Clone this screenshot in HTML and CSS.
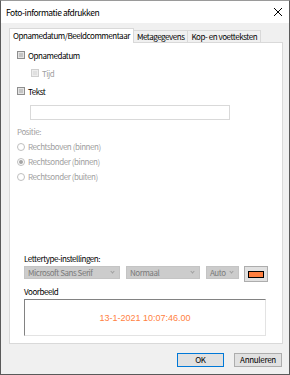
FILE: index.html
```html
<!DOCTYPE html>
<html lang="nl">
<head>
    <meta charset="UTF-8">
    <title>Foto-informatie afdrukken</title>
    <link rel="stylesheet" href="styles.css">
</head>
<body>
    <div class="window">
        <div class="titlebar">
            <span class="title">Foto-informatie afdrukken</span>
            <span class="close">
                <svg width="10" height="10" viewBox="0 0 10 10"><path d="M1 1L9 9M9 1L1 9" stroke="#000" stroke-width="1"/></svg>
            </span>
        </div>

        <div class="content">
            <div class="tabs">
                <div class="tab active">Opnamedatum/Beeldcommentaar</div>
                <div class="tab">Metagegevens</div>
                <div class="tab">Kop- en voetteksten</div>
            </div>

            <div class="panel">
                <div class="row">
                    <span class="check"></span><span>Opnamedatum</span>
                </div>
                <div class="row indent">
                    <span class="check disabled"></span><span class="muted">Tijd</span>
                </div>
                <div class="row">
                    <span class="check"></span><span>Tekst</span>
                </div>
                <div class="textbox"></div>

                <div class="label muted">Positie:</div>
                <div class="radio-row"><span class="radio"></span><span class="muted">Rechtsboven (binnen)</span></div>
                <div class="radio-row"><span class="radio checked"></span><span class="muted">Rechtsonder (binnen)</span></div>
                <div class="radio-row"><span class="radio"></span><span class="muted">Rechtsonder (buiten)</span></div>

                <div class="font-settings">
                    <div class="label">Lettertype-instellingen:</div>
                    <div class="combos">
                        <div class="combo font">Microsoft Sans Serif<span class="arrow"></span></div>
                        <div class="combo style">Normaal<span class="arrow"></span></div>
                        <div class="combo size">Auto<span class="arrow"></span></div>
                        <div class="color-btn"><span class="swatch"></span></div>
                    </div>
                    <div class="label preview-label">Voorbeeld</div>
                    <div class="preview">13-1-2021 10:07:46.00</div>
                </div>
            </div>

            <div class="buttons">
                <button class="btn default">OK</button>
                <button class="btn">Annuleren</button>
            </div>
        </div>
    </div>
</body>
</html>
```

FILE: styles.css
```css
* {
    box-sizing: border-box;
    margin: 0;
    padding: 0;
}

body {
    font-family: 'Noto Sans CJK JP', 'Noto Sans', sans-serif;
    font-size: 8px;
    letter-spacing: -0.45px;
    color: #000;
    background: #3b4a3b;
}

.window {
    width: 290px;
    height: 375px;
    background: #f0f0f0;
    border: 1px solid #5a5a5a;
    border-top-color: #9a9a9a;
    display: flex;
    flex-direction: column;
}

.titlebar {
    height: 22px;
    background: #fff;
    display: flex;
    align-items: center;
    justify-content: space-between;
    padding: 0 6px 0 5px;
}

.title {
    font-size: 8.5px;
    letter-spacing: -0.45px;
}

.close {
    display: flex;
}

.content {
    flex: 1;
    padding: 5px 6px 0 8px;
    display: flex;
    flex-direction: column;
}

.tabs {
    display: flex;
    height: 14px;
    align-items: flex-end;
    position: relative;
    z-index: 1;
    white-space: nowrap;
}

.tab {
    height: 12px;
    line-height: 11px;
    padding: 0 3px;
    border: 1px solid #d9d9d9;
    border-bottom: none;
    background: #f0f0f0;
    margin-left: -1px;
}

.tab.active {
    height: 15px;
    line-height: 13px;
    background: #fff;
    margin-left: 0;
    padding: 0 3px;
    margin-bottom: -1px;
}

.panel {
    height: 302px;
    background: #fff;
    border: 1px solid #d9d9d9;
    display: flex;
    flex-direction: column;
    padding: 3px 7px 7px 7px;
}

.row {
    height: 18px;
    display: flex;
    align-items: center;
}

.row.indent {
    padding-left: 14px;
}

.check {
    width: 8px;
    height: 8px;
    border: 1px solid #8e8e8e;
    background: #c4c4c4;
    box-shadow: inset 0 0 0 1px #e4e4e4;
    margin-right: 3px;
}

.check.disabled {
    border-color: #cfcfcf;
    background: #e0e0e0;
    box-shadow: inset 0 0 0 1px #ededed;
}

.muted {
    color: #a0a0a0;
}

.textbox {
    margin: 5px 0 0 13px;
    width: 200px;
    height: 15px;
    border: 1px solid #d9d9d9;
}

.label {
    height: 14px;
    line-height: 14px;
    margin-top: 5px;
}

.radio-row {
    height: 15px;
    display: flex;
    align-items: center;
}

.radio {
    width: 8px;
    height: 8px;
    border-radius: 50%;
    border: 1px solid #bfbfbf;
    margin-right: 3px;
    display: flex;
    align-items: center;
    justify-content: center;
}

.radio.checked::after {
    content: "";
    width: 4px;
    height: 4px;
    border-radius: 50%;
    background: #a5a5a5;
}

.font-settings {
    margin-top: auto;
    padding-left: 7px;
    width: 257px;
}

.font-settings .label {
    height: 9px;
    line-height: 9px;
    margin-top: 0;
}

.combos {
    display: flex;
    align-items: flex-start;
    margin-top: 3px;
    height: 16px;
}

.combo {
    height: 13px;
    background: #cccccc;
    border: 1px solid #c4c4c4;
    color: #7a7a7a;
    padding-left: 3px;
    line-height: 11px;
    position: relative;
    margin-right: 6px;
    white-space: nowrap;
}

.combo.font { width: 96px; }
.combo.style { width: 74px; }
.combo.size { width: 33px; margin-right: 5px; }

.arrow {
    position: absolute;
    right: 5px;
    top: 3px;
    width: 3px;
    height: 3px;
    border-right: 1px solid #a0a0a0;
    border-bottom: 1px solid #a0a0a0;
    transform: rotate(45deg);
}

.color-btn {
    width: 24px;
    height: 16px;
    background: #e1e1e1;
    border: 1px solid #adadad;
    display: flex;
    align-items: center;
    justify-content: center;
}

.swatch {
    width: 16px;
    height: 7px;
    background: #ff7f3f;
    border: 1px solid #000;
}

.font-settings .preview-label {
    margin-top: 5px;
    line-height: 9px;
}

.preview {
    margin-top: 3px;
    height: 37px;
    width: 242px;
    border: 1px solid #e3e3e3;
    border-top-color: #828282;
    border-left-color: #828282;
    font-family: 'Liberation Sans', Arial, sans-serif;
    font-size: 9px;
    letter-spacing: 0;
    color: #ff7f3f;
    display: flex;
    align-items: center;
    justify-content: center;
}

.buttons {
    display: flex;
    justify-content: flex-end;
    gap: 10px;
    margin-top: 9px;
    padding-right: 1px;
}

.btn {
    font-family: inherit;
    font-size: 8px;
    letter-spacing: -0.3px;
    height: 14px;
    width: 48px;
    background: #e1e1e1;
    border: 1px solid #adadad;
    line-height: 12px;
}

.btn.default {
    border-color: #0078d7;
    width: 47px;
}
```
